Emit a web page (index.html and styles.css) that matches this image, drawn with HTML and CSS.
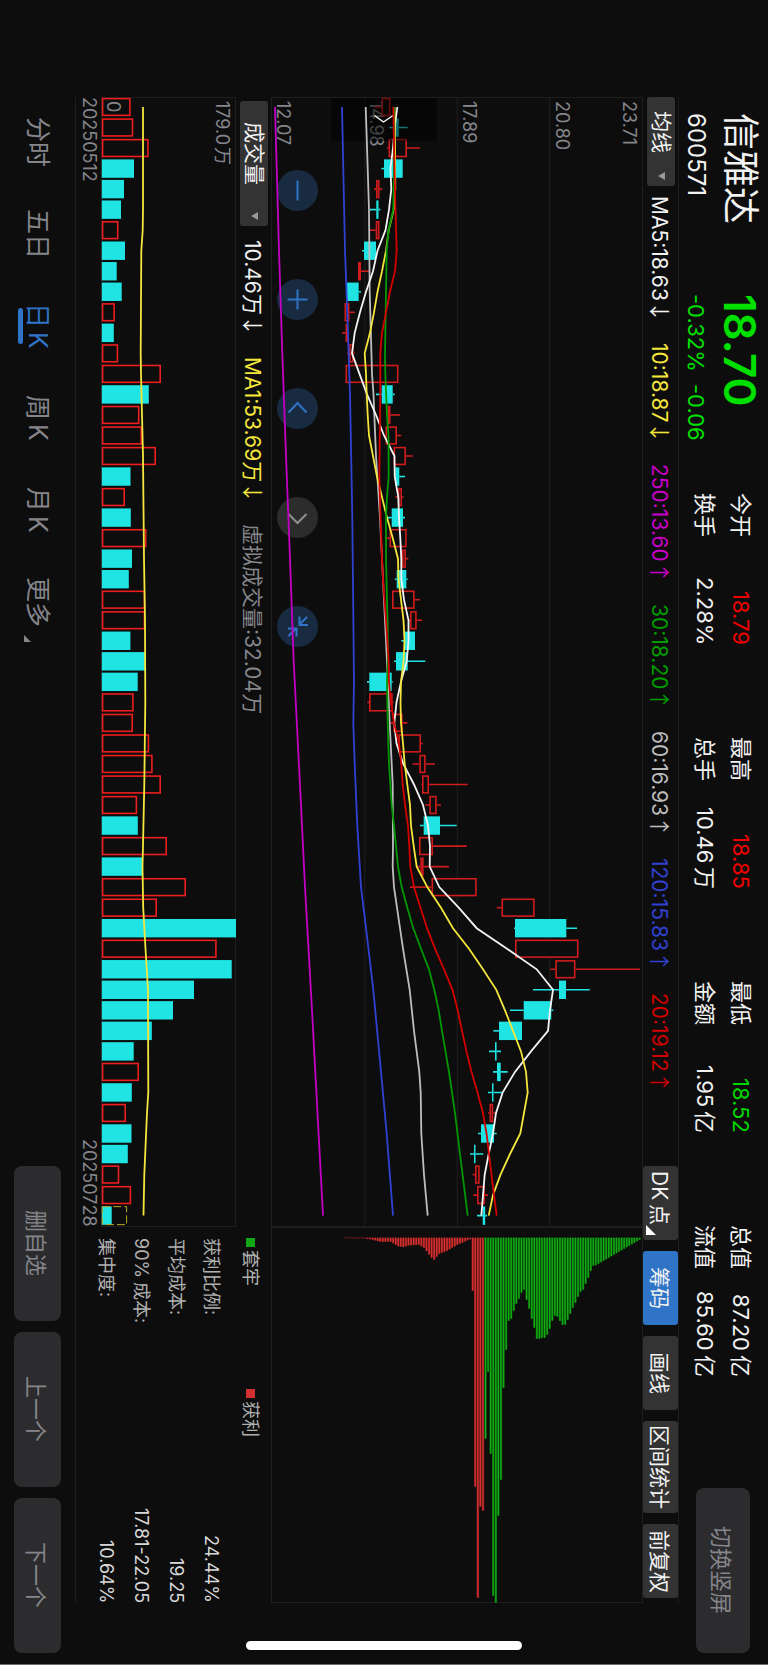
FILE: index.html
```html
<!DOCTYPE html>
<html lang="zh-CN">
<head>
<meta charset="utf-8">
<meta name="viewport" content="width=device-width, initial-scale=1">
<title>信雅达 600571</title>
<link rel="stylesheet" href="styles.css">
</head>
<body>
<div class="app">
  <header class="quote">
    <div class="ident">
      <h1 class="name">信雅达</h1>
      <div class="code">600571</div>
    </div>
    <div class="price">
      <div class="last">18.70</div>
      <div class="change"><span>-0.32%</span><span>-0.06</span></div>
    </div>
    <dl class="stats">
      <div class="stat"><dt>今开</dt><dd class="up">18.79</dd></div>
      <div class="stat"><dt>最高</dt><dd class="up">18.85</dd></div>
      <div class="stat"><dt>最低</dt><dd class="down">18.52</dd></div>
      <div class="stat"><dt>总值</dt><dd>87.20<span class="unit">亿</span></dd></div>
      <div class="stat"><dt>换手</dt><dd>2.28%</dd></div>
      <div class="stat"><dt>总手</dt><dd>10.46<span class="unit">万</span></dd></div>
      <div class="stat"><dt>金额</dt><dd>1.95<span class="unit">亿</span></dd></div>
      <div class="stat"><dt>流值</dt><dd>85.60<span class="unit">亿</span></dd></div>
    </dl>
    <button class="btn btn-orient" type="button">切换竖屏</button>
  </header>

  <main class="board">
    <div class="toolbar">
      <span class="picker picker-main">
        <select class="picker-select" aria-label="主图指标"><option>均线</option></select>
        <span class="caret"></span>
      </span>
      <ul class="averages">
        <li class="ma5">MA5:18.63<i class="trend">↓</i></li>
        <li class="ma10">10:18.87<i class="trend">↓</i></li>
        <li class="ma250">250:13.60<i class="trend">↑</i></li>
        <li class="ma30">30:18.20<i class="trend">↑</i></li>
        <li class="ma60">60:16.93<i class="trend">↑</i></li>
        <li class="ma120">120:15.83<i class="trend">↑</i></li>
        <li class="ma20">20:19.12<i class="trend">↑</i></li>
      </ul>
      <div class="tools">
        <button class="tool tool-menu" type="button">DK<span class="unit">点</span></button>
        <button class="tool tool-on" type="button">筹码</button>
        <button class="tool" type="button">画线</button>
        <button class="tool" type="button">区间统计</button>
        <button class="tool" type="button">前复权</button>
      </div>
    </div>

    <div class="panels">
      <section class="panel kline" aria-label="日K线">
        <div class="zoomers">
          <button class="round" type="button" aria-label="缩小"><svg viewBox="0 0 41 41"><path d="M20.500 10.500v20"/></svg></button>
          <button class="round" type="button" aria-label="放大"><svg viewBox="0 0 41 41"><path d="M20.500 10.500v20M10.500 20.500h20"/></svg></button>
          <button class="round" type="button" aria-label="左移"><svg viewBox="0 0 41 41"><path d="M11.500 24.500l9-9.500 9 9.500"/></svg></button>
          <button class="round round-off" type="button" aria-label="右移"><svg viewBox="0 0 41 41"><path d="M11.500 17l9 9 9-9"/></svg></button>
          <button class="round" type="button" aria-label="收起"><svg viewBox="0 0 41 41"><path d="M30 11l-7.500 7.500M22.500 10.500v8.500h8.500M11.500 30l7.500-7.500M11 22.500h8.500v8"/></svg></button>
        </div>
        <span class="tick tick-top">23.71</span>
        <span class="tick tick-75">20.80</span>
        <span class="tick tick-50">17.89</span>
        <span class="tick tick-25">14.98</span>
        <span class="tick tick-0">12.07</span>
        <svg class="plot" id="kline" viewBox="271 97 372 1130" preserveAspectRatio="none" aria-hidden="true"></svg>
      </section>

      <section class="panel chips" aria-label="筹码分布">
        <svg class="plot" id="chips" viewBox="271 1227 372 376" preserveAspectRatio="none" aria-hidden="true"></svg>
      </section>

      <div class="volbar">
        <span class="picker picker-vol">
          <select class="picker-select" aria-label="副图指标"><option>成交量</option></select>
          <span class="caret"></span>
        </span>
        <span class="vol-now">10.46万<i class="trend">↓</i></span>
        <span class="vol-ma">MA1:53.69万<i class="trend">↓</i></span>
        <span class="vol-est">虚拟成交量:32.04万</span>
      </div>

      <section class="panel volume" aria-label="成交量">
        <svg class="plot" id="volume" viewBox="101 97 135 1130" preserveAspectRatio="none" aria-hidden="true"></svg>
        <span class="tick tick-top">179.0<span class="unit">万</span></span>
        <span class="tick tick-0">0</span>
      </section>

      <div class="dates"><span>20250512</span><span>20250728</span></div>

      <section class="cost">
        <div class="legend">
          <span class="key key-loss">套牢</span>
          <span class="key key-gain">获利</span>
        </div>
        <dl class="figures">
          <div class="figure"><dt>获利比例:</dt><dd>24.44%</dd></div>
          <div class="figure"><dt>平均成本:</dt><dd>19.25</dd></div>
          <div class="figure"><dt>90%<span class="unit">成本:</span></dt><dd>17.81-22.05</dd></div>
          <div class="figure"><dt>集中度:</dt><dd>10.64%</dd></div>
        </dl>
      </section>
    </div>
  </main>

  <footer class="foot">
    <nav class="tabs">
      <a class="tab" href="#fs">分时</a>
      <a class="tab" href="#wr">五日</a>
      <a class="tab tab-on" href="#day">日<span class="unit">K</span></a>
      <a class="tab" href="#week">周<span class="unit">K</span></a>
      <a class="tab" href="#month">月<span class="unit">K</span></a>
      <a class="tab tab-more" href="#more">更多</a>
    </nav>
    <div class="actions">
      <button class="btn" type="button">删自选</button>
      <button class="btn" type="button">上一个</button>
      <button class="btn" type="button">下一个</button>
    </div>
  </footer>
  <div class="home-bar"></div>
</div>
<script src="charts.js"></script>
</body>
</html>
```
FILE: styles.css
```css
* {
  box-sizing: border-box;
  margin: 0;
  padding: 0;
}

:root {
  --bg: #0d0d0d;
  --line: #1e1e1e;
  --muted: #85858b;
  --button: #2c2c2e;
  --tool: #333333;
  --blue: #2f74c6;
}

body {
  background: var(--bg);
}

/* Landscape screen held upright: everything runs sideways */
.app {
  position: relative;
  writing-mode: vertical-rl;
  text-orientation: sideways;
  display: flex;
  flex-direction: column;
  width: 100%;
  height: 100vh;
  background: var(--bg);
  border-bottom: 1px solid #6c6c6c;
  color: #f2f2f2;
  font-family: Inter, "Noto Sans CJK SC", sans-serif;
  font-size: 21px;
  white-space: nowrap;
}

button,
select {
  border: 0;
  font: inherit;
  color: inherit;
  writing-mode: inherit;
  text-orientation: inherit;
}

ul {
  list-style: none;
}

i {
  font-style: normal;
}

a {
  color: inherit;
  text-decoration: none;
}

.unit {
  margin-inline-start: 4px;
}

.btn {
  background: var(--button);
  border-radius: 8px;
  color: var(--muted);
  font-size: 22px;
}

/* Quote header */
.quote {
  display: flex;
  flex: none;
  block-size: 89px;
  padding-inline: 113px 11px;
  font-size: 22px;
}

.ident {
  inline-size: 181px;
  padding-block-start: 6px;
}

.name {
  font-size: 37px;
  font-weight: 400;
  line-height: 44px;
}

.code,
.change {
  margin-block-start: 6px;
  line-height: 32px;
}

.code {
  font-size: 24px;
}

.price {
  inline-size: 199px;
  padding-block-start: 6px;
  color: #00e000;
}

.last {
  font-size: 44px;
  font-weight: 600;
  line-height: 44px;
}

.change {
  display: flex;
  gap: 12px;
}

.stats {
  display: grid;
  grid-template-columns: repeat(4, 152px);
  grid-auto-rows: 36px;
  column-gap: 92px;
  padding-block-start: 9px;
  line-height: 36px;
}

.stat {
  display: flex;
  justify-content: space-between;
}

.up {
  color: #f00000;
}

.down {
  color: #00d800;
}

.btn-orient {
  block-size: 54px;
  inline-size: 165px;
  margin-block-start: 18px;
  margin-inline-start: auto;
}

/* Indicator toolbar */
.board {
  display: flex;
  flex-direction: column;
  flex: 1;
  min-block-size: 0;
  margin-inline: 97px 61px;
  border-block: 1px solid var(--line);
}

.toolbar {
  display: flex;
  align-items: center;
  flex: none;
  block-size: 35px;
}

.picker {
  position: relative;
  display: block;
  block-size: 28px;
  background: var(--tool);
  border-radius: 3px;
}

.picker-main {
  inline-size: 89px;
}

.picker-vol {
  inline-size: 125px;
}

.picker-select {
  appearance: none;
  display: block;
  inline-size: 100%;
  block-size: 100%;
  padding-inline-start: 14px;
  background: none;
  line-height: 28px;
}

.picker-vol .picker-select {
  padding-inline-start: 21px;
}

.caret {
  position: absolute;
  inset-inline-end: 6px;
  inset-block-start: 10px;
  border-block: 4px solid transparent;
  border-inline: 4px solid transparent;
  border-block-start: 7px solid #9a9a9e;
  border-block-end: 0;
  pointer-events: none;
}

.averages {
  display: flex;
  gap: 22px;
  margin-inline-start: 10px;
}

.trend {
  display: inline-block;
  inline-size: 20px;
  font-family: "Noto Sans CJK SC", sans-serif;
}

.ma5 { color: #f2f2f2; }
.ma10 { color: #f4e63c; }
.ma250 { color: #c800c8; }
.ma30 { color: #009c00; }
.ma60 { color: #bcbcbc; }
.ma120 { color: #3040d0; }
.ma20 { color: #d00000; }

.tools {
  display: flex;
  align-self: stretch;
  gap: 11px;
  margin-inline: auto 5px;
}

.tool {
  position: relative;
  min-inline-size: 74px;
  padding-inline: 4px;
  background: var(--tool);
  border-radius: 3px;
}

.tool-on {
  background: var(--blue);
}

.tool-menu {
  padding-inline-end: 14px;
}

.tool-menu::after {
  content: "";
  position: absolute;
  inset-inline-end: 5px;
  inset-block-end: 3px;
  border-block-start: 10px solid transparent;
  border-inline-end: 10px solid #ffffff;
}

/* Chart panels */
.panels {
  display: grid;
  flex: 1;
  min-block-size: 0;
  grid-template-columns: 1130fr 376fr;
  grid-template-rows: 372fr 35px 135fr 25px;
}

.panel {
  position: relative;
  min-inline-size: 0;
  min-block-size: 0;
  box-shadow: inset 0 0 0 1px var(--line);
}

.plot {
  position: absolute;
  top: 0;
  left: 0;
  width: 100%;
  height: 100%;
  pointer-events: none;
}

.tick {
  position: absolute;
  inset-inline-start: 4px;
  color: var(--muted);
  font-size: 18px;
  line-height: 24px;
}

.tick .unit {
  margin-inline-start: 2px;
}

.tick-top { inset-block-start: 2px; }
.tick-75 { inset-block-end: 75%; }
.tick-50 { inset-block-end: 50%; }
.tick-25 { inset-block-end: 25%; }
.tick-0 { inset-block-end: 0; }

.zoomers {
  position: absolute;
  inset-block-end: 6px;
  inset-inline-start: 73px;
  display: flex;
  gap: 68px;
}

.round {
  inline-size: 41px;
  block-size: 41px;
  background: #192b40;
  border-radius: 50%;
}

.round svg {
  display: block;
  width: 41px;
  height: 41px;
  fill: none;
  stroke: #2f74c6;
  stroke-width: 2;
}

.round-off {
  background: #2c2c2c;
}

.round-off svg {
  stroke: #8f8f8f;
}

.volbar {
  display: flex;
  align-items: center;
  grid-column: 1;
  padding-inline-start: 4px;
}

.vol-now {
  margin-inline-start: 14px;
}

.vol-ma {
  margin-inline-start: 22px;
  color: #f4e63c;
}

.vol-est {
  margin-inline-start: 22px;
  color: var(--muted);
}

.volume,
.dates {
  grid-column: 1;
}

.dates {
  display: flex;
  justify-content: space-between;
  color: var(--muted);
  font-size: 18px;
  line-height: 24px;
}

/* Cost distribution figures */
.cost {
  grid-column: 2;
  grid-row: 2 / 5;
  padding-inline-start: 11px;
  color: #b0b0b0;
  font-size: 18px;
}

.legend {
  display: grid;
  grid-template-columns: 151px 1fr;
  line-height: 42px;
}

.key {
  display: flex;
  align-items: center;
  gap: 3px;
}

.key::before {
  content: "";
  inline-size: 9px;
  block-size: 9px;
  background: #12a612;
}

.key-gain::before {
  background: #d03030;
}

.figure {
  display: flex;
  justify-content: space-between;
  line-height: 35px;
}

.figure dd {
  color: #d8d8d8;
}

/* Footer */
.foot {
  display: flex;
  flex: none;
  justify-content: space-between;
  block-size: 75px;
  padding-inline: 96px 11px;
}

.tabs {
  display: flex;
  color: var(--muted);
  font-size: 25px;
}

.tab {
  position: relative;
  inline-size: 92px;
  line-height: 75px;
  text-align: center;
}

.tab-on {
  color: var(--blue);
}

.tab-on::after {
  content: "";
  position: absolute;
  inset-block-end: 18px;
  inset-inline: 28px;
  block-size: 5px;
  border-radius: 3px;
  background: var(--blue);
}

.tab-more::after {
  content: "";
  position: absolute;
  inset-block-end: 24px;
  inset-inline-end: 6px;
  border-block-start: 7px solid transparent;
  border-inline-end: 7px solid var(--muted);
}

.actions {
  display: flex;
  gap: 11px;
  block-size: 47px;
  margin-block-start: 14px;
}

.actions .btn {
  inline-size: 155px;
}

.home-bar {
  position: absolute;
  inset-block: 32%;
  inset-inline-end: 14px;
  inline-size: 9px;
  border-radius: 5px;
  background: #ffffff;
}
```
FILE: charts.js
```js
const NS = 'http://www.w3.org/2000/svg';
const FIRST = 107;
const STEP = 20.53;
const RED = '#d01c1c';
const CYAN = '#20e4e4';
const rowY = (i) => FIRST + i * STEP;

function add(svg, tag, attrs) {
  const el = document.createElementNS(NS, tag);
  for (const key in attrs) el.setAttribute(key, attrs[key]);
  svg.appendChild(el);
}

function hline(svg, x) {
  add(svg, 'path', { d: `M${x} 97V1227`, stroke: '#202020', 'stroke-width': 1 });
}

/* points: index, value pairs */
function curve(svg, color, points, width) {
  const d = [];
  for (let k = 0; k < points.length; k += 2) {
    d.push(`${points[k + 1]},${rowY(points[k]).toFixed(1)}`);
  }
  add(svg, 'polyline', { points: d.join(' '), fill: 'none', stroke: color, 'stroke-width': width || 1.8 });
}

function body(svg, i, up, x1, x2, color) {
  const y = rowY(i) - 9.2;
  if (up) {
    add(svg, 'rect', { x: x1 + 0.8, y: y + 0.8, width: Math.max(x2 - x1 - 1.6, 1), height: 16.8, fill: '#0d0d0d', stroke: color, 'stroke-width': 1.6 });
  } else {
    add(svg, 'rect', { x: x1, y: y, width: x2 - x1, height: 18.4, fill: CYAN });
  }
}

/* up flag, low, body start, body end, high */
const candles = [
  [1, 374.7, 381.5, 390.5, 390.5], [0, 389.3, 394.7, 398.7, 407.7], [1, 387, 388.5, 407, 420],
  [0, 381.3, 384, 402.7, 402.7], [1, 374, 376, 379.5, 382.3], [0, 370, 376.3, 378.5, 380.3],
  [1, 370, 375.7, 379.5, 379.5], [0, 362, 364, 376, 376], [1, 358, 358, 361, 369.3],
  [0, 347, 347, 358.7, 361], [1, 344.5, 344.5, 349.5, 354.7], [1, 342, 345.5, 348, 348],
  [1, 347.3, 349.2, 353.5, 354.7], [1, 345.5, 345.5, 398.5, 398.5], [0, 376, 381.7, 392.7, 394.7],
  [1, 387.5, 387.5, 390.5, 400], [1, 384.7, 385.5, 397, 401.3], [1, 393, 393.5, 406, 412.7],
  [0, 395.3, 395.3, 399.3, 405], [1, 395.3, 398, 402, 403.7], [0, 387.3, 391.7, 403, 405],
  [1, 385.7, 389.5, 406.7, 406.7], [1, 402, 402, 406, 408.3], [0, 394.7, 396.7, 406.3, 407.7],
  [1, 392, 392, 414.7, 419.7], [1, 409, 410, 416.7, 422], [0, 401.3, 404.7, 415, 415],
  [0, 394, 396, 407.7, 425.3], [0, 367, 369.3, 391.7, 392.7], [1, 367.3, 369, 392.7, 393.7],
  [1, 390.3, 393.3, 402.7, 407.3], [1, 398.3, 398.3, 421, 422.7], [1, 412.7, 419.3, 425.7, 435],
  [1, 421.3, 422, 429, 467.7], [1, 425.3, 429.3, 436.7, 441], [0, 420, 423.7, 440, 456.7],
  [1, 418.7, 419, 433, 466.7], [1, 417.3, 420.3, 423.7, 449], [1, 410, 431.5, 476.7, 476.7],
  [1, 496.7, 501.5, 534.7, 534.7], [0, 514, 515, 566.3, 577], [1, 515, 515, 578.5, 578.5],
  [1, 550.3, 555.3, 575.5, 640], [0, 533, 559, 566, 589.7], [0, 510, 523.7, 551.3, 553.3],
  [0, 493.3, 499, 522, 522], [0, 489, 495, 496.6, 501], [0, 493, 497, 500.7, 507.7],
  [0, 488, 492, 493.5, 502.7], [1, 488, 489.5, 493.2, 496.7], [0, 478, 481, 494, 496.7],
  [0, 470, 474, 475.5, 483.3], [1, 472.7, 475, 479.7, 479.7], [1, 473.3, 477, 485, 488],
  [0, 477, 482.7, 485.2, 487]
];

const kline = document.getElementById('kline');
[364.8, 457.3, 549.7].forEach((x) => hline(kline, x));
candles.forEach(([up, low, a, b, high], i) => {
  const color = up ? RED : CYAN;
  const y = rowY(i);
  add(kline, 'path', { d: `M${low} ${y}H${a}M${b} ${y}H${high}`, stroke: color, 'stroke-width': 1.6 });
  body(kline, i, up, a, b, color);
});

/* Latest-price handle over the first rows */
add(kline, 'rect', { x: 331, y: 98, width: 106, height: 43, rx: 1, fill: '#000', 'fill-opacity': 0.5 });
add(kline, 'path', { d: 'M374.500 115.500L383.500 122L393 115.500', fill: 'none', stroke: '#fff', 'stroke-width': 1.4 });

curve(kline, '#bdbdbd', [0, 365.7, 3, 367.7, 5, 369, 9, 369.7, 13, 372, 14, 373.5, 17, 376, 20, 380, 24, 384, 27, 387, 30, 389.7, 33, 392.7, 36, 393, 37, 392.7, 38, 394, 40, 400, 41, 403, 43, 409.7, 45, 414, 47, 419.3, 48, 420.7, 50, 421.3, 52, 424, 54, 427.7]);
curve(kline, '#3142d2', [0, 342, 7, 345, 10, 347.3, 14, 350, 20, 352.3, 28, 354, 30, 353.3, 32, 354.7, 35, 357.3, 38, 361, 40, 366, 43, 373.3, 47, 381, 50, 386.7, 54, 393]);
curve(kline, '#c400c4', [0, 275, 7, 279, 12, 282.3, 17, 286, 22, 290, 27, 293.7, 34, 301, 38, 305, 44, 312, 54, 323]);
curve(kline, '#f4f4f4', [0, 397.3, 1, 394.7, 2, 393, 3, 390.5, 4, 391.3, 5, 389, 6, 385.5, 7, 377.5, 8, 373, 9, 366, 10, 360, 11, 354.7, 12, 352, 13, 359.5, 14, 367, 15, 376, 16, 384, 17, 394.5, 18, 394.7, 19, 398.3, 20, 399, 21, 400.3, 22, 401.3, 23, 401.3, 24, 404, 25, 408.5, 26, 408.5, 27, 406.7, 28, 401, 29, 396.5, 30, 394.3, 31, 396.5, 32, 403.3, 33, 414, 34, 423, 35, 428, 36, 430, 37, 429.7, 38, 439.3, 39, 458.7, 40, 476.7, 41, 507, 42, 536.7, 43, 553, 44, 550, 45, 548, 46, 531, 47, 515, 48, 502.7, 49, 496, 50, 493, 51, 488.7, 52, 484.7, 53, 483, 54, 481.3]);
curve(kline, '#f4e63c', [0, 394.5, 2, 395, 4, 395.3, 5, 393.7, 6, 388.7, 7, 386, 8, 382, 9, 377.5, 10, 374, 11, 370, 12, 364.7, 13, 366, 14, 366.7, 15, 367.7, 16, 369, 17, 373, 18, 377, 19, 382, 20, 387, 21, 392.7, 22, 398, 23, 398.5, 24, 401, 25, 403.5, 26, 404.5, 27, 403.5, 28, 401, 29, 400.5, 30, 401, 31, 403, 32, 404.7, 33, 407.3, 34, 410, 35, 411, 36, 413.7, 37, 416.7, 38, 427.3, 39, 441, 40, 453, 41, 469, 42, 483, 43, 496.3, 44, 505, 45, 513, 46, 521, 47, 526, 48, 527.7, 49, 524, 50, 520.3, 51, 510, 52, 500.5, 53, 493, 54, 488.7]);
curve(kline, '#009800', [0, 394, 3, 394, 5, 393.3, 6, 388.5, 7, 386.7, 9, 386, 12, 385, 13, 385.3, 15, 387, 16, 388.5, 18, 388.7, 19, 387, 20, 386, 22, 386, 25, 387.5, 27, 388, 28, 387, 30, 387.7, 32, 389, 34, 391.7, 35, 394, 37, 398, 38, 401.7, 39, 407.3, 40, 413.3, 41, 421, 42, 429, 43, 434.3, 44, 438.7, 45, 442, 47, 449, 49, 455, 51, 460, 54, 467.7]);
curve(kline, '#d40000', [0, 393.3, 3, 394.5, 5, 395.5, 7, 396.7, 8, 395, 9, 390, 10, 386, 11, 382, 12, 380.3, 14, 380.3, 18, 379.3, 20, 380.5, 22, 382, 23, 383, 25, 386, 27, 388.7, 28, 389, 29, 391, 30, 394, 31, 399, 32, 401.3, 33, 402.7, 34, 405, 35, 408, 36, 409.3, 37, 410.3, 38, 414, 39, 420.5, 40, 427, 41, 435, 42, 444, 43, 452.5, 44, 457.7, 45, 462, 46, 466.5, 47, 471.5, 48, 477.5, 49, 483, 50, 486.5, 51, 489, 52, 491.5, 53, 494, 54, 496.7]);

/* up flag, bar end */
const volumes = [
  [1, 130.7], [1, 133.3], [1, 148.7], [0, 134], [0, 124], [0, 121], [1, 118.5], [0, 125], [0, 116.7], [0, 121.7],
  [1, 114.9], [0, 113.8], [1, 118.2], [1, 161], [0, 148.8], [1, 139.5], [1, 142], [1, 156], [0, 130.5], [1, 125],
  [0, 130.8], [1, 146.5], [0, 132], [0, 128.8], [1, 145.2], [1, 145.2], [0, 130.4], [0, 145.4], [0, 137.7], [1, 133.7],
  [1, 133], [1, 149.2], [1, 152.7], [1, 161], [1, 137.2], [0, 137.8], [1, 167], [0, 142.7], [1, 186], [1, 157],
  [0, 236], [1, 216.7], [0, 231.7], [0, 194], [0, 173], [0, 151.8], [0, 133.7], [1, 139], [0, 131.8], [1, 126],
  [0, 131.5], [0, 127.8], [1, 119.3], [1, 131.2], [0, 111.7]
];

const volume = document.getElementById('volume');
volumes.forEach(([up, end], i) => body(volume, i, up, 101.8, end, '#ec1e1e'));
add(volume, 'rect', { x: 102.3, y: rowY(54) - 9, width: 24.3, height: 18, fill: 'none', stroke: '#b8a824', 'stroke-width': 1, 'stroke-dasharray': '8 3' });
curve(volume, '#f4e63c', [0, 143, 5, 143, 6, 142.7, 7, 141.3, 12, 140.7, 13, 141, 17, 143, 22, 144, 25, 145, 29, 145.3, 33, 144.3, 36, 143, 37, 142.5, 39, 143.2, 41, 145.5, 43, 148, 48, 148.3, 49, 147, 52, 144.3, 54, 143.5]);

/* Cost distribution: bars at an even pitch, lengths in px */
const pitch = 2.567;
const origin = 472.7;
const peaks = [53, 249, 360, 269, 273, 201, 134, 216, 358, 365, 278, 242, 150, 112, 83, 81, 73, 66, 61, 55, 52, 62, 71, 81, 90, 101, 101, 100, 100, 97, 91, 83, 78, 79, 83, 87, 87, 82, 76, 70, 65, 59, 54, 52, 46, 40, 33, 28];
const tail = [[-50, 0.4], [-42, 0.6], [-39, 2], [-36, 4], [-32, 4], [-29, 8.500], [-27, 9.300], [-25, 7.700], [-21, 7], [-19, 10], [-16, 20], [-15, 22], [-13, 16], [-10, 13], [-6, 7], [-1, 1.500]];
const chips = document.getElementById('chips');

function bar(k, len) {
  const red = k < 5;
  const x = origin + k * pitch;
  add(chips, 'rect', { x: x - pitch / 2, y: 1237.7, width: pitch, height: len, fill: red ? '#6a1a1a' : '#0a500c' });
  add(chips, 'rect', { x: x - 0.7, y: 1237.7, width: 1.4, height: len, fill: red ? '#d83030' : '#12ac14' });
}

for (let t = 0; t < tail.length - 1; t++) {
  const [k1, l1] = tail[t];
  const [k2, l2] = tail[t + 1];
  for (let k = k1; k < k2; k++) bar(k, l1 + ((l2 - l1) * (k - k1)) / (k2 - k1));
}
bar(-1, 1.5);
peaks.forEach((len, k) => bar(k, len));
for (let k = peaks.length; k < 66; k++) bar(k, 27.5 - (k - peaks.length) * 1.5);
```
